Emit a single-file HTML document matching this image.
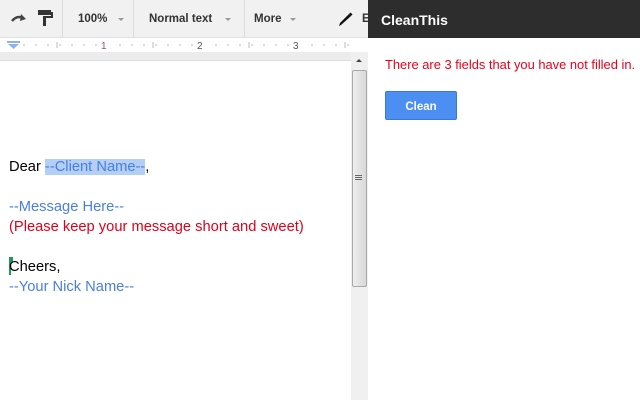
<!DOCTYPE html>
<html><head><style>
*{margin:0;padding:0;box-sizing:border-box}
body{width:640px;height:400px;overflow:hidden;background:#fff;font-family:"Liberation Sans",Arial,sans-serif;position:relative}
.tb{position:absolute;left:0;top:0;width:368px;height:38px;background:#f1f1f1;border-bottom:1px solid #e0e0e0}
.sep{position:absolute;top:0;width:1px;height:37px;background:#dcdcdc}
.tbt{position:absolute;top:13px;font-size:11.5px;font-weight:bold;color:#333}
.arr{position:absolute;top:18px;width:0;height:0;border-left:3px solid transparent;border-right:3px solid transparent;border-top:3px solid #999}
.ruler{position:absolute;left:0;top:38px;width:368px;height:14px;background:#fff}
.strip{position:absolute;left:0;top:52px;width:351px;height:9px;background:#ececec;border-bottom:1px solid #ddd}
.doc{position:absolute;left:9px;font-size:14.7px;white-space:nowrap}
.sb{position:absolute;left:351px;top:52px;width:17px;height:348px;background:#f0f0f0}
.thumb{position:absolute;left:352px;top:70px;width:15px;height:217px;border:1px solid #a9a9a9;border-radius:2px;background:linear-gradient(90deg,#eee,#d8d8d8)}
.panel{position:absolute;left:368px;top:0;width:272px;height:400px;background:#fff}
.hd{height:38px;background:#2d2d2d;color:#fff;font-weight:bold;font-size:14px;padding:12px 0 0 13px}
</style></head><body>
<div class="tb">
<svg style="position:absolute;left:10px;top:12px" width="18" height="12"><path d="M2 9 Q7 3 13 6" stroke="#444" stroke-width="2.4" fill="none"/><path d="M11 2 L16 7 L10 9Z" fill="#444"/></svg>
<svg style="position:absolute;left:37px;top:9px" width="18" height="18"><rect x="1" y="1" width="13" height="5" fill="#333"/><rect x="14" y="3" width="2" height="5" fill="#333"/><rect x="6" y="7" width="10" height="2" fill="#333"/><rect x="6" y="8" width="3" height="9" fill="#333"/></svg>
<div class="sep" style="left:62px"></div>
<div class="tbt" style="left:78px">100%</div><div class="arr" style="left:118px"></div>
<div class="sep" style="left:133px"></div>
<div class="tbt" style="left:149px">Normal text</div><div class="arr" style="left:225px"></div>
<div class="sep" style="left:244px"></div>
<div class="tbt" style="left:254px">More</div><div class="arr" style="left:290px"></div>
<svg style="position:absolute;left:338px;top:11px" width="16" height="16"><path d="M3 14 L1 15 L2 12 L11 3 L13 5Z" fill="#111"/><path d="M11 3 L12.5 1.5 L14.5 3.5 L13 5Z" fill="#111"/></svg>
<div class="tbt" style="left:362px;color:#333">E</div>
</div>
<div class="ruler">
<svg width="368" height="14" style="position:absolute;left:0;top:0">
<path d="M7 3 H20 V5 H7Z" fill="#8fb1ee"/><path d="M8 6 L19 6 L13.5 11Z" fill="#8fb1ee"/>
<g stroke="#bbb" stroke-width="1">
<path d="M24 6v2M36 6v2M48 6v2M60 6v2M72 6v2M84 6v2M96 6v2M120 6v2M132 6v2M144 6v2M156 6v2M168 6v2M180 6v2M192 6v2M216 6v2M228 6v2M240 6v2M252 6v2M264 6v2M276 6v2M288 6v2M312 6v2M324 6v2M336 6v2M348 6v2"/>
<path d="M57 4v6M153 4v6M249 4v6M345 4v6"/>
</g>
<text x="101" y="11" font-size="10" fill="#8a5a8a" font-family="Liberation Sans">1</text>
<text x="197" y="11" font-size="10" fill="#555" font-family="Liberation Sans">2</text>
<text x="293" y="11" font-size="10" fill="#555" font-family="Liberation Sans">3</text>
</svg></div>
<div class="strip"></div>
<div class="doc" style="top:159px">Dear <span style="background:#b3cff5;color:#4a7fe0">--Client Name--</span>,</div>
<div class="doc" style="top:199px;color:#4a7fe0">--Message Here--</div>
<div class="doc" style="top:219px;color:#e0001a">(Please keep your message short and sweet)</div>
<div style="position:absolute;left:9px;top:257px;width:4px;height:5px;background:#1a9b5a"></div>
<div style="position:absolute;left:9px;top:257px;width:2px;height:18px;background:#1a9b5a"></div>
<div class="doc" style="top:259px">Cheers,</div>
<div class="doc" style="top:279px;color:#4a7fe0">--Your Nick Name--</div>
<div class="sb"></div>
<div style="position:absolute;left:356px;top:59px;width:0;height:0;border-left:3px solid transparent;border-right:3px solid transparent;border-bottom:3px solid #444"></div>
<div class="thumb"></div>
<div style="position:absolute;left:355px;top:175px;width:7px;height:5px;border-top:1px solid #666;border-bottom:1px solid #666"></div>
<div style="position:absolute;left:355px;top:177px;width:7px;height:1px;background:#666"></div>
<div class="panel">
<div class="hd">CleanThis</div>
<div style="position:absolute;left:17px;top:57px;font-size:12.9px;color:#e8001c;white-space:nowrap">There are 3 fields that you have not filled in.</div>
<div style="position:absolute;left:17px;top:91px;width:72px;height:29px;background:#4d8ef2;border:1px solid #3a78d8;border-radius:2px;color:#fff;font-size:11.5px;font-weight:bold;text-align:center;line-height:31px">Clean</div>
</div>
</body></html>
